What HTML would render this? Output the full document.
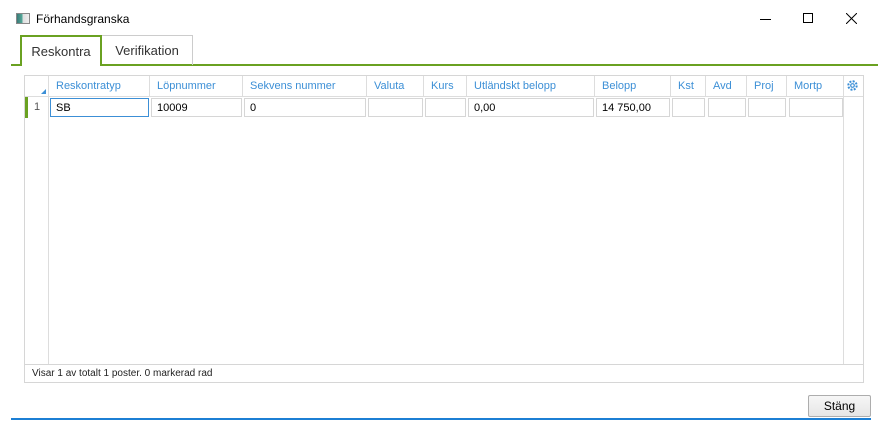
<!DOCTYPE html>
<html><head><meta charset="utf-8"><style>
*{margin:0;padding:0;box-sizing:border-box}
body{width:878px;height:426px;background:#fff;position:relative;overflow:hidden;font-family:"Segoe UI","Liberation Sans",sans-serif;font-size:12px;color:#000}
.a{position:absolute}
.hd{position:absolute;top:76px;height:20px;color:#3c8fd6;font-size:11px;line-height:21px;padding-left:7px;border-right:1px solid #ddd}
.c{position:absolute;top:98px;height:19px;border:1px solid #d6d6d6;font-size:11px;line-height:19px;padding-left:5px}
</style></head><body>
<div class="a" style="left:16px;top:13px;width:14px;height:11px;border:1px solid #888;background:linear-gradient(90deg,#3a7a78 0,#5a9 45%,#ddd 45%,#eee)"></div>
<div class="a" style="left:36px;top:12px;font-size:12px">Förhandsgranska</div>
<div class="a" style="left:760px;top:19px;width:11px;height:1px;background:#000"></div>
<div class="a" style="left:803px;top:13px;width:10px;height:10px;border:1px solid #000"></div>
<svg class="a" style="left:846px;top:13px" width="11" height="11"><path d="M0 0L11 11M11 0L0 11" stroke="#000" stroke-width="1"/></svg>
<div class="a" style="left:11px;top:64px;width:867px;height:2px;background:#6aa121"></div>
<div class="a" style="left:101px;top:35px;width:92px;height:30px;border:1px solid #ccc;border-bottom:none;font-size:13px;line-height:30px;text-align:center;color:#333">Verifikation</div>
<div class="a" style="left:20px;top:35px;width:82px;height:31px;border:2px solid #6aa121;border-bottom:none;background:#fff;font-size:13px;line-height:29px;text-align:center;color:#333">Reskontra</div>
<div class="a" style="left:24px;top:75px;width:840px;height:308px;border:1px solid #d6d6d6"></div>
<div class="a" style="left:25px;top:96px;width:838px;height:1px;background:#ddd"></div>
<div class="a" style="left:48px;top:76px;width:1px;height:288px;background:#ddd"></div>
<div class="a" style="left:843px;top:76px;width:1px;height:288px;background:#ddd"></div>
<div class="a" style="left:25px;top:364px;width:838px;height:1px;background:#d6d6d6"></div>
<svg class="a" style="left:41px;top:89px" width="5" height="5"><path d="M5 0V5H0Z" fill="#3c8fd6"/></svg>
<div class="hd" style="left:49px;width:101px">Reskontratyp</div>
<div class="hd" style="left:150px;width:93px">Löpnummer</div>
<div class="hd" style="left:243px;width:124px">Sekvens nummer</div>
<div class="hd" style="left:367px;width:57px">Valuta</div>
<div class="hd" style="left:424px;width:43px">Kurs</div>
<div class="hd" style="left:467px;width:128px">Utländskt belopp</div>
<div class="hd" style="left:595px;width:76px">Belopp</div>
<div class="hd" style="left:671px;width:35px">Kst</div>
<div class="hd" style="left:706px;width:41px">Avd</div>
<div class="hd" style="left:747px;width:40px">Proj</div>
<div class="hd" style="left:787px;width:56px;border-right:none">Mortp</div>
<svg class="a" style="left:846px;top:79px" width="13" height="13" viewBox="0 0 13 13"><circle cx="6.5" cy="6.5" r="4.2" fill="none" stroke="#3c8fd6" stroke-width="2" stroke-dasharray="2 1.3"/><circle cx="6.5" cy="6.5" r="1.8" fill="none" stroke="#3c8fd6" stroke-width="1.2"/></svg>
<div class="a" style="left:25px;top:97px;width:3px;height:21px;background:#6aa121"></div>
<div class="a" style="left:34px;top:101px;font-size:11px;color:#555">1</div>
<div class="c" style="left:50px;width:99px;border-color:#3c8fd6">SB</div>
<div class="c" style="left:151px;width:91px">10009</div>
<div class="c" style="left:244px;width:122px">0</div>
<div class="c" style="left:368px;width:55px"></div>
<div class="c" style="left:425px;width:41px"></div>
<div class="c" style="left:468px;width:126px">0,00</div>
<div class="c" style="left:596px;width:74px">14 750,00</div>
<div class="c" style="left:672px;width:33px"></div>
<div class="c" style="left:708px;width:38px"></div>
<div class="c" style="left:748px;width:38px"></div>
<div class="c" style="left:789px;width:54px"></div>
<div class="a" style="left:32px;top:368px;font-size:10px;color:#222">Visar 1 av totalt 1 poster. 0 markerad rad</div>
<div class="a" style="left:808px;top:395px;width:63px;height:22px;border:1px solid #adadad;border-radius:2px;background:linear-gradient(#f6f6f6,#e6e6e6);font-size:12px;line-height:20px;text-align:center">Stäng</div>
<div class="a" style="left:11px;top:418px;width:860px;height:2px;background:#1c7fd4"></div>
</body></html>
